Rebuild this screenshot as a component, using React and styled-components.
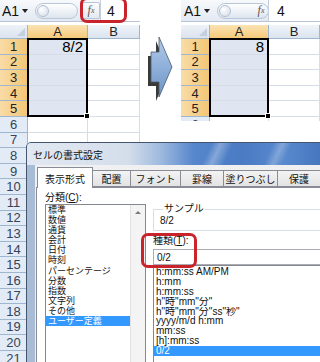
import React from "react";
import styled, { createGlobalStyle } from "styled-components";

const XL_FONT = `"Liberation Sans", "Noto Sans CJK JP", sans-serif`;
const UI_FONT = `"Liberation Sans", "Noto Sans CJK JP", sans-serif`;
const ROW_H = 15.6;

const GlobalStyle = createGlobalStyle`
  html, body { margin: 0; padding: 0; background: #fff; }
  #root { width: 320px; height: 362px; }
`;

const Page = styled.div`
  position: relative;
  width: 320px;
  height: 362px;
  overflow: hidden;
  display: flex;
  align-items: flex-start;
  background: #fff;
  font-family: ${XL_FONT};
`;

const SheetFrame = styled.div`
  position: relative;
  flex: none;
  width: ${(p) => p.$width}px;
  height: ${(p) => p.$height}px;
  overflow: hidden;
  display: flex;
  flex-direction: column;
`;

const FormulaBar = styled.div`
  flex: none;
  height: 22px;
  display: flex;
  align-items: center;
  box-sizing: border-box;
  border-bottom: 1px solid #b7c4d6;
  background: linear-gradient(#f7f9fc, #e3e9f2);
`;

const NameBox = styled.div`
  flex: none;
  box-sizing: border-box;
  width: ${(p) => p.$w}px;
  padding-left: ${(p) => p.$pl}px;
  display: flex;
  align-items: center;
  font-size: 14px;
  color: #111;
`;

const Caret = styled.span`
  margin-left: auto;
  margin-right: 4px;
  width: 0;
  height: 0;
  border-left: 3px solid transparent;
  border-right: 3px solid transparent;
  border-top: 4px solid #222;
`;

const Pill = styled.div`
  flex: none;
  box-sizing: border-box;
  width: ${(p) => p.$w}px;
  height: 16px;
  margin-left: 3px;
  border: 1px solid #b9c6d7;
  border-radius: 8px;
  background: linear-gradient(#ffffff, #dde5ef);
  display: flex;
  align-items: center;
  padding-left: 1px;
`;

const Knob = styled.span`
  width: 12px;
  height: 12px;
  border-radius: 50%;
  border: 1px solid #b4c0cf;
  box-sizing: border-box;
  background: radial-gradient(circle at 35% 35%, #ffffff, #d2dbe6);
`;

const FxBox = styled.div`
  flex: none;
  box-sizing: border-box;
  width: ${(p) => p.$w}px;
  height: 17px;
  margin-left: ${(p) => p.$ml}px;
  display: flex;
  align-items: center;
  justify-content: center;
  font-family: "Liberation Serif", serif;
  font-style: italic;
  font-size: 12px;
  color: #555;
  border: ${(p) => (p.$framed ? "1px solid #b9c5d5" : "none")};
  border-radius: 2px;
  background: ${(p) => (p.$framed ? "linear-gradient(#fdfdfe, #e4eaf2)" : "transparent")};
  & sub {
    font-size: 8px;
    vertical-align: -1px;
  }
`;

const FormulaInput = styled.div`
  flex: 1;
  align-self: stretch;
  display: flex;
  align-items: center;
  padding-left: ${(p) => p.$pl}px;
  background: #fff;
  border-left: 1px solid #c5cfdc;
  font-size: 14px;
  color: #111;
`;

const Callout = styled.div`
  position: absolute;
  left: ${(p) => p.$x}px;
  top: ${(p) => p.$y}px;
  width: ${(p) => p.$w}px;
  height: ${(p) => p.$h}px;
  box-sizing: border-box;
  border: 3px solid #c9232b;
  border-radius: 7px;
  pointer-events: none;
`;

const Grid = styled.div`
  position: relative;
  margin-top: 3px;
  display: grid;
  grid-template-columns: ${(p) => p.$cols};
  grid-template-rows: 14px;
  grid-auto-rows: ${ROW_H}px;
`;

const Corner = styled.div`
  position: relative;
  box-sizing: border-box;
  background: linear-gradient(#eef2f8, #dbe3ee);
  border-right: 1px solid #9eb6ce;
  border-bottom: 1px solid #9eb6ce;
  &::after {
    content: "";
    position: absolute;
    right: 2px;
    bottom: 2px;
    border-left: 8px solid transparent;
    border-bottom: 8px solid #c3cfdf;
  }
`;

const ColHead = styled.div`
  box-sizing: border-box;
  display: flex;
  align-items: center;
  justify-content: center;
  font-size: 13px;
  color: #222;
  background: ${(p) =>
    p.$active
      ? "linear-gradient(#fbe3b4, #f5c97a)"
      : "linear-gradient(#f1f5fa, #dbe3ee)"};
  border-right: 1px solid #9eb6ce;
  border-bottom: 1px solid #9eb6ce;
`;

const RowHead = styled.div`
  box-sizing: border-box;
  display: flex;
  align-items: center;
  justify-content: center;
  font-size: 13px;
  color: ${(p) => (p.$active ? "#222" : "#34445a")};
  background: ${(p) =>
    p.$active ? "linear-gradient(90deg, #f9dca6, #f3c676)" : "#e3ebf6"};
  border-right: 1px solid #9eb6ce;
  border-bottom: 1px solid #9eb6ce;
`;

const Cell = styled.div`
  box-sizing: border-box;
  display: flex;
  align-items: center;
  justify-content: flex-end;
  padding-right: 4px;
  font-size: 15px;
  color: #000;
  background: ${(p) => (p.$sel ? "#dfe5f1" : "#fff")};
  border-right: 1px solid #d6dde8;
  border-bottom: 1px solid #d6dde8;
`;

const Selection = styled.div`
  position: absolute;
  left: ${(p) => p.$left - 1}px;
  top: 13px;
  width: ${(p) => p.$width + 1}px;
  height: ${5 * ROW_H + 1}px;
  box-sizing: border-box;
  border: 2px solid #000;
  pointer-events: none;
  &::after {
    content: "";
    position: absolute;
    right: -4px;
    bottom: -4px;
    width: 4px;
    height: 4px;
    background: #000;
    border: 1px solid #fff;
  }
`;

const ArrowSlot = styled.div`
  flex: none;
  width: 41px;
  padding: 35px 0 0 6px;
  box-sizing: border-box;
`;

/* ---------- dialog ---------- */

const Dialog = styled.div`
  position: absolute;
  left: 26px;
  top: 142px;
  width: 300px;
  height: 225px;
  box-sizing: border-box;
  border: 1px solid #44566e;
  border-radius: 5px 5px 0 0;
  background-color: #a9bcd6;
  display: flex;
  flex-direction: column;
  font-family: ${UI_FONT};
  overflow: hidden;
`;

const TitleBar = styled.div`
  flex: none;
  height: 22px;
  display: flex;
  align-items: center;
  padding-left: 6px;
  font-size: 10px;
  color: #111;
  background-color: #5a8bd0;
  background-image: linear-gradient(
      115deg,
      rgba(255, 255, 255, 0) 60%,
      rgba(255, 255, 255, 0.3) 63%,
      rgba(255, 255, 255, 0) 67%,
      rgba(255, 255, 255, 0) 80%,
      rgba(255, 255, 255, 0.25) 83%,
      rgba(255, 255, 255, 0) 86%
    ),
    linear-gradient(
      90deg,
      #e1e8f1 0%,
      #d4deeb 34%,
      #9db9de 45%,
      #5686cc 56%,
      #4a7bc3 72%,
      #5989ce 86%,
      #4474bb 100%
    );
`;

const Client = styled.div`
  flex: 1;
  margin-left: 8px;
  background: #f0f0f0;
  display: flex;
  flex-direction: column;
  padding: 1px 0 0 1px;
`;

const TabStrip = styled.div`
  flex: none;
  height: 21px;
  display: flex;
  align-items: flex-end;
  padding-left: 1px;
  position: relative;
  z-index: 1;
`;

const Tab = styled.div`
  flex: none;
  box-sizing: border-box;
  width: ${(p) => p.$w}px;
  height: ${(p) => (p.$active ? 21 : 17)}px;
  margin-bottom: ${(p) => (p.$active ? -1 : 0)}px;
  display: flex;
  align-items: center;
  justify-content: center;
  font-size: 10px;
  color: #111;
  border: 1px solid #898c95;
  border-bottom: ${(p) => (p.$active ? "none" : "1px solid #898c95")};
  margin-left: ${(p) => (p.$first ? 0 : -1)}px;
  background: ${(p) =>
    p.$active ? "#fff" : "linear-gradient(#f3f3f3, #e3e3e3)"};
`;

const TabPanel = styled.div`
  flex: 1;
  border: 1px solid #898c95;
  border-right: none;
  background: #fff;
  display: grid;
  grid-template-columns: 101px 1fr;
  column-gap: 7px;
  padding: 4px 0 0 8px;
`;

const Column = styled.div`
  display: flex;
  flex-direction: column;
  min-width: 0;
  position: relative;
`;

const Label = styled.div`
  font-size: 10px;
  line-height: 12px;
  height: 12px;
  color: #111;
  white-space: nowrap;
  margin-top: ${(p) => p.$mt || 0}px;
  & u {
    text-decoration: underline;
  }
`;

const ListBox = styled.div`
  flex: 1;
  box-sizing: border-box;
  border: 1px solid #828790;
  background: #fff;
  display: flex;
  overflow: hidden;
`;

const ListItems = styled.div`
  flex: 1;
  display: flex;
  flex-direction: column;
  padding-top: ${(p) => p.$pt || 0}px;
  min-width: 0;
`;

const Item = styled.div`
  flex: none;
  height: ${(p) => p.$h}px;
  line-height: ${(p) => p.$h}px;
  padding-left: 2px;
  font-size: ${(p) => p.$fs}px;
  white-space: nowrap;
  overflow: hidden;
  color: ${(p) => (p.$sel ? "#fff" : "#111")};
  background: ${(p) => (p.$sel ? "#3399ff" : "transparent")};
`;

const ScrollBar = styled.div`
  flex: none;
  width: 14px;
  background: #f4f4f4;
  border-left: 1px solid #e2e2e2;
  display: flex;
  flex-direction: column;
`;

const ScrollButton = styled.div`
  height: 15px;
  display: flex;
  align-items: center;
  justify-content: center;
  &::before {
    content: "";
    border-left: 3px solid transparent;
    border-right: 3px solid transparent;
    border-bottom: 3px solid #7a7a7a;
  }
`;

const SampleGroup = styled.fieldset`
  margin: 12px 0 0 0;
  padding: 1px 0 2px 6px;
  border: 1px solid #d5dfe5;
  border-right: none;
  min-width: 0;
  height: 27px;
  box-sizing: border-box;
`;

const Legend = styled.legend`
  padding: 0 1px;
  margin-left: 3px;
  font-size: 10px;
  line-height: 10px;
  color: #111;
`;

const SampleValue = styled.div`
  font-size: 10px;
  line-height: 11px;
  color: #111;
`;

const TypeInput = styled.div`
  flex: none;
  box-sizing: border-box;
  height: 16px;
  margin-top: 2px;
  border: 1px solid #abadb3;
  border-right: none;
  padding-left: 3px;
  display: flex;
  align-items: center;
  font-size: 10px;
  color: #111;
  background: #fff;
`;

function FxLabel() {
  return (
    <>
      f<sub>x</sub>
    </>
  );
}

function Sheet({ width, height, cols, rows, colA, headW, nameW, namePl, pillW, fxW, fxMl, framed, inputPl, value, children }) {
  const rowEls = [];
  for (let r = 1; r <= rows; r++) {
    const sel = r <= 5;
    rowEls.push(
      <React.Fragment key={r}>
        <RowHead $active={sel}>{r}</RowHead>
        <Cell $sel={sel}>{r === 1 ? value : ""}</Cell>
        <Cell />
      </React.Fragment>
    );
  }
  return (
    <SheetFrame $width={width} $height={height}>
      <FormulaBar>
        <NameBox $w={nameW} $pl={namePl}>
          A1
          <Caret />
        </NameBox>
        <Pill $w={pillW}>
          <Knob />
        </Pill>
        <FxBox $w={fxW} $ml={fxMl} $framed={framed}>
          <FxLabel />
        </FxBox>
        <FormulaInput $pl={inputPl}>4</FormulaInput>
      </FormulaBar>
      <Grid $cols={cols}>
        <Corner />
        <ColHead $active>A</ColHead>
        <ColHead>B</ColHead>
        {rowEls}
        <Selection $left={headW} $width={colA} />
      </Grid>
      {children}
    </SheetFrame>
  );
}

function BlockArrow() {
  return (
    <svg width="32" height="66" viewBox="0 0 32 66">
      <defs>
        <linearGradient id="arrowFill" x1="0" y1="0" x2="0" y2="1">
          <stop offset="0" stopColor="#b4cbe8" />
          <stop offset="0.5" stopColor="#8fb0da" />
          <stop offset="1" stopColor="#6d92c4" />
        </linearGradient>
      </defs>
      <polygon
        points="4,19 12,19 12,4 25,34 12,64 12,49 4,49"
        fill="#3a3a3a"
        transform="translate(-2 2)"
      />
      <polygon
        points="5,17 13,17 13,2 26,32 13,62 13,47 5,47"
        fill="url(#arrowFill)"
        stroke="#4a5a70"
        strokeWidth="0.8"
      />
    </svg>
  );
}

const categories = ["標準", "数値", "通貨", "会計", "日付", "時刻", "パーセンテージ", "分数", "指数", "文字列", "その他", "ユーザー定義"];
const formats = ["h:mm:ss AM/PM", "h:mm", "h:mm:ss", 'h"時"mm"分"', 'h"時"mm"分"ss"秒"', "yyyy/m/d h:mm", "mm:ss", "[h]:mm:ss", "0/2"];
const tabs = [
  ["表示形式", 56],
  ["配置", 39],
  ["フォント", 51],
  ["罫線", 44],
  ["塗りつぶし", 55],
  ["保護", 44],
];

export default function App() {
  return (
    <Page>
      <GlobalStyle />
      <Sheet
        width={140}
        height={362}
        cols="28px 60px 52px"
        rows={21}
        colA={60}
        headW={28}
        nameW={32}
        namePl={2}
        pillW={43}
        fxW={18}
        fxMl={4}
        framed
        inputPl={6}
        value="8/2"
      >
        <Callout $x={80} $y={-3} $w={47} $h={26} />
      </Sheet>
      <ArrowSlot>
        <BlockArrow />
      </ArrowSlot>
      <Sheet
        width={139}
        height={121}
        cols="29px 59px 51px"
        rows={6}
        colA={59}
        headW={29}
        nameW={33}
        namePl={3}
        pillW={52}
        fxW={14}
        fxMl={-15}
        inputPl={8}
        value="8"
      />
      <Dialog>
        <TitleBar>セルの書式設定</TitleBar>
        <Client>
          <TabStrip>
            {tabs.map(([t, w], i) => (
              <Tab key={t} $w={w} $active={i === 0} $first={i === 0}>
                {t}
              </Tab>
            ))}
          </TabStrip>
          <TabPanel>
            <Column>
              <Label>
                分類(<u>C</u>):
              </Label>
              <ListBox>
                <ListItems>
                  {categories.map((c, i) => (
                    <Item key={c} $h={10.1} $fs={9} $sel={i === categories.length - 1}>
                      {c}
                    </Item>
                  ))}
                </ListItems>
                <ScrollBar>
                  <ScrollButton />
                </ScrollBar>
              </ListBox>
            </Column>
            <Column>
              <SampleGroup>
                <Legend>サンプル</Legend>
                <SampleValue>8/2</SampleValue>
              </SampleGroup>
              <Label $mt={4}>
                種類(<u>T</u>):
              </Label>
              <TypeInput>0/2</TypeInput>
              <ListBox>
                <ListItems $pt={1}>
                  {formats.map((f, i) => (
                    <Item key={f} $h={9.9} $fs={10} $sel={i === formats.length - 1}>
                      {f}
                    </Item>
                  ))}
                </ListItems>
              </ListBox>
              <Callout $x={-12} $y={41} $w={56} $h={35} />
            </Column>
          </TabPanel>
        </Client>
      </Dialog>
    </Page>
  );
}
